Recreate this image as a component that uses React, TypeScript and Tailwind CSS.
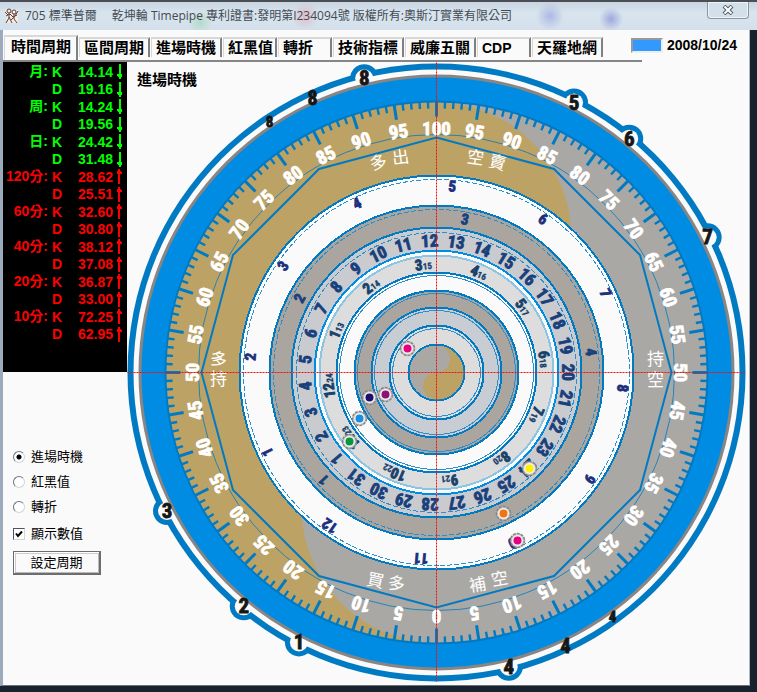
import { useState } from 'react';
import { clsx } from 'clsx';

type Trend = 'up' | 'down';

interface Reading {
  label: string;
  k: string;
  d: string;
  trend: Trend;
}

const READINGS: Reading[] = [
  { label: '月:', k: '14.14', d: '19.16', trend: 'down' },
  { label: '周:', k: '14.24', d: '19.56', trend: 'down' },
  { label: '日:', k: '24.42', d: '31.48', trend: 'down' },
  { label: '120分:', k: '28.62', d: '25.51', trend: 'up' },
  { label: '60分:', k: '32.60', d: '30.80', trend: 'up' },
  { label: '40分:', k: '38.12', d: '37.08', trend: 'up' },
  { label: '20分:', k: '36.87', d: '33.00', trend: 'up' },
  { label: '10分:', k: '72.25', d: '62.95', trend: 'up' },
];

const TABS = ['時間周期', '區間周期', '進場時機', '紅黑值', '轉折', '技術指標', '威廉五關', 'CDP', '天羅地網'];
const MODES = ['進場時機', '紅黑值', '轉折'];

// Rings from the outside in: radius, fill, edge colour, radius of the thin inner line.
const RINGS = [
  { r: 197, fill: '#fafafa', edge: '#007ac2', inner: 193, dash: '5 2' },
  { r: 167, fill: '#aaa59e', edge: '#007ac2', inner: 163, dash: '5 2' },
  { r: 145, fill: '#cacbce', edge: '#007ac2', inner: 140, dash: '5 2' },
  { r: 122, fill: '#fafafa', edge: '#008ce2', inner: 0, dash: undefined },
  { r: 117, fill: '#dcdddc', edge: '#8cc4e4', inner: 0, dash: undefined },
  { r: 100, fill: '#fafafa', edge: '#007ac2', inner: 97, dash: undefined },
  { r: 82, fill: '#aaa59e', edge: '#007ac2', inner: 79, dash: undefined },
  { r: 65, fill: '#c8ccd3', edge: '#007ac2', inner: 62, dash: undefined },
  { r: 47, fill: '#dcdddc', edge: '#007ac2', inner: 44, dash: undefined },
  { r: 28, fill: '#aaa8a5', edge: '#007ac2', inner: 0, dash: undefined },
];

const BUMPS = [
  { text: '8', angle: -13.8 },
  { text: '5', angle: 27 },
  { text: '6', angle: 39.5 },
  { text: '7', angle: 63.5 },
  { text: '4', angle: 166.2 },
  { text: '1', angle: 207 },
  { text: '2', angle: 219.5 },
  { text: '3', angle: 242.8 },
];

const RIM_DIGITS = [
  { text: '8', x: -124, y: -275, size: 20 },
  { text: '8', x: -167, y: -251, size: 15 },
  { text: '4', x: 129, y: 273, size: 20 },
  { text: '4', x: 176, y: 244, size: 15 },
];

const ZONES = [
  { text: '多', x: -58, y: -210, turn: -15 },
  { text: '出', x: -36, y: -215, turn: -8 },
  { text: '空', x: 39, y: -215, turn: 8 },
  { text: '賣', x: 61, y: -210, turn: 15 },
  { text: '多', x: -218, y: -13, turn: 12 },
  { text: '持', x: -218, y: 6, turn: 0 },
  { text: '持', x: 219, y: -14, turn: 0 },
  { text: '空', x: 219, y: 7, turn: 0 },
  { text: '買', x: -61, y: 208, turn: 12 },
  { text: '多', x: -40, y: 211, turn: 10 },
  { text: '補', x: 41, y: 212, turn: -10 },
  { text: '空', x: 63, y: 206, turn: -10 },
];

const MARKERS = [
  { x: -29, y: -24, color: '#e5007f' },
  { x: -51, y: 22, color: '#8c1277' },
  { x: -67, y: 25, color: '#1f0d6e' },
  { x: -77, y: 46, color: '#1a8fe0' },
  { x: -87, y: 69, color: '#0a963c' },
  { x: 93, y: 96, color: '#fff200' },
  { x: 67, y: 141, color: '#ee7511' },
  { x: 81, y: 168, color: '#e5007f' },
];

function polar(r: number, angle: number) {
  const a = (angle * Math.PI) / 180;
  return { x: r * Math.sin(a), y: -r * Math.cos(a) };
}

function yinYang(r: number) {
  const h = r / 2;
  return `M0,${-r} A${r},${r} 0 0 0 0,${r} A${h},${h} 0 0 1 0,0 A${h},${h} 0 0 0 0,${-r}Z`;
}

interface DialTextProps {
  text: string;
  sub?: string;
  r: number;
  angle: number;
  size: number;
  fill: string;
}

function DialText({ text, sub, r, angle, size, fill }: DialTextProps) {
  return (
    <g transform={`rotate(${angle})`}>
      <text y={-r + size * 0.36} fontSize={size} fill={fill} stroke={fill} strokeWidth={0.8} textAnchor="middle">
        {text}
        {sub && <tspan fontSize={9} strokeWidth={0.3}>{sub}</tspan>}
      </text>
    </g>
  );
}

function Dial() {
  const polygon = Array.from({ length: 12 }, (_, i) => {
    const p = polar(235, i * 30);
    return `${p.x},${p.y}`;
  }).join(' ');

  return (
    <svg
      viewBox="-309.5 -310.5 622 623"
      className="block h-auto w-full font-['Impact','Roboto_Condensed','Open_Sans_Condensed','Noto_Sans_Condensed','Liberation_Sans_Narrow','Liberation_Sans',sans-serif] font-bold"
    >
      <g fill="#007ac2">
        <circle r={309} />
        {BUMPS.map((b) => {
          const p = polar(303, b.angle);
          return <circle key={b.angle} cx={p.x} cy={p.y} r={14} />;
        })}
      </g>
      <g fill="#fafafa">
        <circle r={303} />
        {BUMPS.map((b) => {
          const p = polar(303, b.angle);
          return <circle key={b.angle} cx={p.x} cy={p.y} r={9} />;
        })}
      </g>
      <circle r={298} fill="#888583" />
      <circle r={295} fill="#008ce2" />
      <circle r={271} fill="#aaa8a5" />
      <path d={yinYang(270)} fill="#bda265" />
      <circle r={271} fill="none" stroke="#007ac2" strokeWidth={2} />

      {Array.from({ length: 200 }, (_, i) => (
        <line
          key={i}
          y1={-271}
          y2={i % 5 === 0 ? -256 : -264}
          stroke="#007ac2"
          strokeWidth={i % 5 === 0 ? 3 : 2.4}
          transform={`rotate(${i * 1.8})`}
        />
      ))}
      <circle r={238} fill="none" stroke="#007ac2" strokeWidth={0.8} />
      <polygon points={polygon} fill="none" stroke="#007ac2" strokeWidth={2} />
      {Array.from({ length: 40 }, (_, i) => (
        <DialText key={i} text={String(Math.abs(100 - i * 5))} r={244} angle={i * 9} size={19} fill="#fff" />
      ))}

      {ZONES.map((z) => (
        <text
          key={`${z.x},${z.y}`}
          transform={`translate(${z.x} ${z.y}) rotate(${z.turn})`}
          y={6}
          fontSize={17}
          fill="#fff"
          textAnchor="middle"
          className="font-['Noto_Sans_CJK_TC',sans-serif] font-normal"
        >
          {z.text}
        </text>
      ))}

      <g shapeRendering="crispEdges">
        {RINGS.map((ring) => (
          <g key={ring.r}>
            <circle r={ring.r} fill={ring.fill} stroke={ring.edge} strokeWidth={2} />
            {ring.inner > 0 && (
              <circle r={ring.inner} fill="none" stroke="#2b8fcb" strokeWidth={1} strokeDasharray={ring.dash} />
            )}
          </g>
        ))}
      </g>
      <path d={yinYang(27)} fill="#bda265" transform="rotate(180)" />

      {Array.from({ length: 12 }, (_, i) => (
        <DialText key={i} text={String(((i + 4) % 12) + 1)} r={187} angle={4.8 + i * 30} size={15} fill="#1b2f7d" />
      ))}
      {Array.from({ length: 5 }, (_, i) => (
        <DialText key={i} text={String(((i + 2) % 5) + 1)} r={156} angle={10.5 + i * 72} size={15} fill="#17407d" />
      ))}
      {Array.from({ length: 31 }, (_, i) => (
        <DialText key={i} text={String(i + 1)} r={132} angle={(i - 11) * (360 / 31) - 3} size={17} fill="#17407d" />
      ))}
      {Array.from({ length: 12 }, (_, i) => (
        <DialText
          key={i}
          text={String(i + 1)}
          sub={String(i + 13)}
          r={109}
          angle={(i - 2) * 30 - 7}
          size={15}
          fill="#17406b"
        />
      ))}

      {MARKERS.map((m) => (
        <g key={`${m.x},${m.y}`} transform={`translate(${m.x} ${m.y})`}>
          <circle r={7} fill="#c8c8c8" stroke="#858585" strokeWidth={1.5} strokeDasharray="3 1" />
          <circle r={5.4} fill="#f4f4f4" />
          <circle r={4} fill={m.color} />
        </g>
      ))}

      <g fill="#161616" stroke="#161616" strokeWidth={0.8} textAnchor="middle">
        {BUMPS.map((b) => {
          const p = polar(303, b.angle);
          return (
            <text key={b.angle} x={p.x} y={p.y + 7} fontSize={21}>
              {b.text}
            </text>
          );
        })}
        {RIM_DIGITS.map((d) => (
          <text key={d.x} x={d.x} y={d.y + d.size * 0.36} fontSize={d.size}>
            {d.text}
          </text>
        ))}
      </g>

      <g stroke="#f00f0f" strokeWidth={1} strokeDasharray="2 1">
        <line y1={-310} y2={309} />
        <line x1={-309} x2={309} />
      </g>
    </svg>
  );
}

function TrendArrow({ trend }: { trend: Trend }) {
  return (
    <svg viewBox="0 0 5 15" className={clsx('h-[15px] w-[5px]', trend === 'up' && 'rotate-180')} shapeRendering="crispEdges">
      <path d="M2 0h2v15H2zM0 10h5v2H0zM1 12h4v1H1z" fill="currentColor" />
    </svg>
  );
}

function ReadingsTable() {
  return (
    <div className="h-[310px] bg-black pt-px">
      <table className="w-full table-fixed border-collapse text-[14px] leading-4 font-bold whitespace-nowrap">
        <colgroup>
          <col className="w-[45px]" />
          <col className="w-[20px]" />
          <col className="w-[45px]" />
          <col />
        </colgroup>
        {READINGS.map((row) => (
          <tbody key={row.label} className={row.trend === 'up' ? 'text-[#ff0000]' : 'text-[#00ff00]'}>
            <tr className="h-[17px]">
              <th scope="rowgroup" rowSpan={2} className="p-0 text-right align-top font-bold">{row.label}</th>
              <td className="p-0 pl-1">K</td>
              <td className="p-0 text-right">{row.k}</td>
              <td className="p-0 pl-1"><TrendArrow trend={row.trend} /></td>
            </tr>
            <tr className="h-[18px]">
              <td className="p-0 pl-1">D</td>
              <td className="p-0 text-right">{row.d}</td>
              <td className="p-0 pl-1"><TrendArrow trend={row.trend} /></td>
            </tr>
          </tbody>
        ))}
      </table>
    </div>
  );
}

function Controls() {
  const [mode, setMode] = useState(MODES[0]);
  const [showValues, setShowValues] = useState(true);

  return (
    <div className="flex flex-col items-start pt-[72px] pl-[10px] text-[13px] text-black">
      {MODES.map((m) => (
        <label key={m} className="flex h-[25px] items-center gap-[6px]">
          <input
            type="radio"
            name="mode"
            checked={mode === m}
            onChange={() => setMode(m)}
            className="size-3 appearance-none rounded-full border border-t-gray-500 border-r-gray-300 border-b-gray-300 border-l-gray-500 bg-white checked:bg-[radial-gradient(circle,#000_2px,#fff_3px)]"
          />
          {m}
        </label>
      ))}
      <label className="mt-[2px] flex h-[26px] items-center gap-[6px]">
        <span className="relative flex size-3">
          <input
            type="checkbox"
            checked={showValues}
            onChange={(e) => setShowValues(e.target.checked)}
            className="size-3 appearance-none border border-t-gray-600 border-r-gray-300 border-b-gray-300 border-l-gray-600 bg-white"
          />
          {showValues && (
            <svg viewBox="0 0 12 12" className="pointer-events-none absolute inset-0">
              <path d="M3 5.5 5 8l4-4.5" fill="none" stroke="#000" strokeWidth={2} />
            </svg>
          )}
        </span>
        顯示數值
      </label>
      <button
        type="button"
        className="mt-1 h-6 w-[88px] border border-r-2 border-b-2 border-[#6d6d6d] bg-[#fafafa] shadow-[inset_1px_1px_0_#fff,inset_-1px_-1px_0_#bbb,inset_2px_2px_0_#ccc]"
      >
        設定周期
      </button>
    </div>
  );
}

function TitleBar() {
  return (
    <header className="flex h-[30px] items-center border-t-2 border-[#4a4f55] bg-[radial-gradient(circle_at_200px_20px,#b4dac8_0,transparent_12px),radial-gradient(circle_at_305px_14px,#dcbcc9_0,transparent_14px),radial-gradient(circle_at_550px_14px,#adb9e4_0,transparent_14px),radial-gradient(circle_at_611px_17px,#9fa9dc_0,transparent_12px),linear-gradient(#c9d5e1,#d8e5ef_40%,#d3e0eb)] pl-1">
      <svg viewBox="0 0 16 16" className="size-4 shrink-0" fill="none" stroke="#5e4038">
        <path d="M1 2h13v13H3z" fill="#f3ebe2" stroke="none" />
        <circle cx="5" cy="3" r="2" fill="#f6ead8" />
        <circle cx="10" cy="4" r="2" fill="#fff" />
        <path d="M5 5v5l-3 5M5 9l3 6M10 6v5l3 4M10 9l-3 3M2 8l4-2 3 3 4-2M1 4l3 3M14 3l-3 5" />
      </svg>
      <h1 className="ml-[5px] flex-1 truncate font-['Open_Sans','Noto_Sans_CJK_TC',sans-serif] text-[12px] whitespace-pre text-[#444a52]">
        {'705 標準普爾　 乾坤輪 Timepipe 專利證書:發明第I234094號 版權所有:奧斯汀實業有限公司'}
      </h1>
      <button
        type="button"
        aria-label="Close"
        className="mr-2 flex h-[17px] w-[42px] items-center justify-center self-start rounded-b border border-t-0 border-[#8995a3] bg-[#d3dfe9] shadow-[inset_0_0_0_1px_#eef4f8]"
      >
        <svg viewBox="0 0 12 10" className="h-[10px] w-3">
          <path d="M2 1l8 8M10 1 2 9" stroke="#555b63" strokeWidth={4} />
          <path d="M2.500 1.500l7 7M9.500 1.500l-7 7" stroke="#fff" strokeWidth={2} />
        </svg>
      </button>
    </header>
  );
}

function TabStrip() {
  const [active, setActive] = useState(TABS[0]);

  return (
    <div>
      <div className="flex h-[30px] items-end justify-between">
        <nav className="flex shrink-0 items-end gap-px pl-px">
          {TABS.map((tab) => (
            <button
              key={tab}
              type="button"
              onClick={() => setActive(tab)}
              className={clsx(
                'border-t-2 border-r-2 border-l border-t-[#d8d8d8] border-r-[#808080] border-l-[#d8d8d8] text-left leading-4 font-bold whitespace-nowrap text-black',
                tab === active ? 'w-[74px]' : tab.length < 4 ? 'w-[54px]' : 'w-[71px]',
                tab === 'CDP' ? 'text-[14px]' : 'text-[15px]',
                tab === active ? 'h-[25px] pb-1 pl-[6px]' : 'mb-[3px] h-5 pl-1',
              )}
            >
              {tab}
            </button>
          ))}
        </nav>
        <div className="flex h-[30px] items-center gap-1 pr-3 text-[14px] font-bold text-black">
          <span className="h-[15px] w-8 border-2 border-t-[#999] border-r-[#eee] border-b-[#eee] border-l-[#999] bg-[#3399ff]" />
          <time dateTime="2008-10-24">2008/10/24</time>
        </div>
      </div>
      <div className="h-[2px] w-6/7 bg-[#858585]" />
    </div>
  );
}

export default function App() {
  return (
    <div className="flex min-h-screen flex-col bg-[#17222e] font-['Liberation_Sans','Noto_Sans_CJK_TC',sans-serif]">
      <TitleBar />
      <main className="mr-[7px] mb-[6px] flex flex-1 flex-col border-r border-b border-l-3 border-r-[#aebac6] border-b-[#68737d] border-l-[#9babbc] bg-[#fafafa]">
        <TabStrip />
        <div className="flex flex-1 items-start">
          <aside className="w-[124px] shrink-0">
            <ReadingsTable />
            <Controls />
          </aside>
          <section className="relative min-w-0 flex-1">
            <h2 className="absolute top-[7px] left-[10px] text-[15px] font-bold text-black">進場時機</h2>
            <Dial />
          </section>
        </div>
      </main>
    </div>
  );
}
